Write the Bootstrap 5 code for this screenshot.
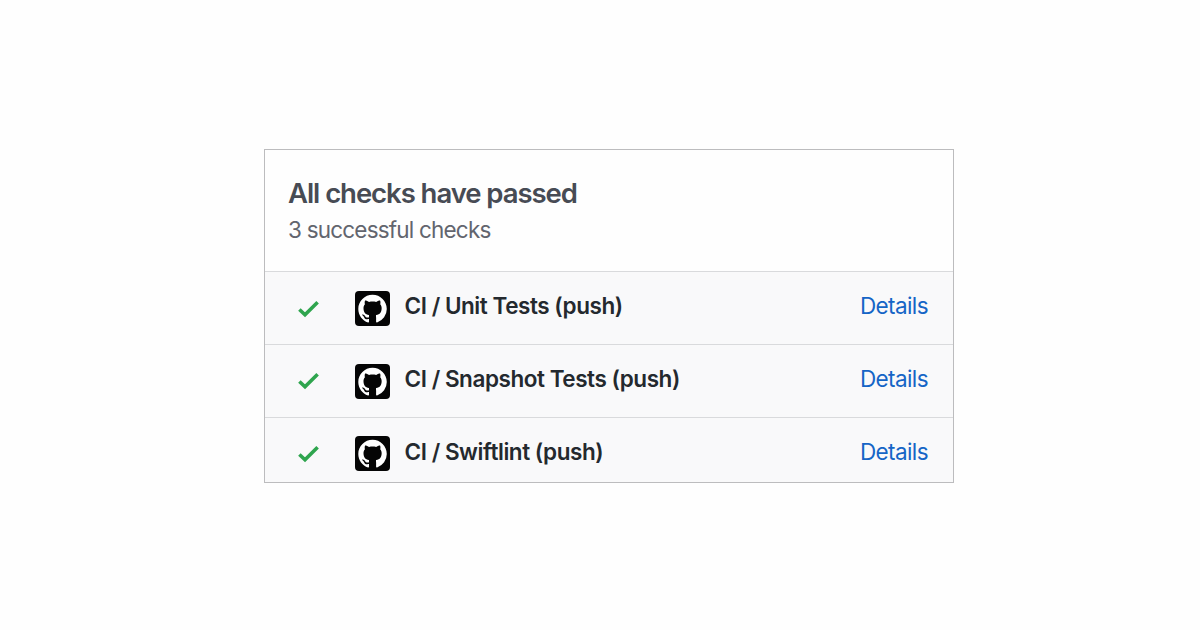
<!DOCTYPE html>
<html lang="en">
<head>
<meta charset="utf-8">
<title>All checks have passed</title>
<link href="https://cdn.jsdelivr.net/npm/bootstrap@5.3.0/dist/css/bootstrap.min.css" rel="stylesheet">
<style>
  body { background: #fefefe; font-family: Inter, "Liberation Sans", sans-serif; font-size: 23px; line-height: 30px; padding: 149px 0 0 264px; }
  .checks { width: 689.5px; height: 334px; border: 1px solid #bcbcbe; background: #fefefe; }
  .checks-head { height: 121px; padding: 26px 23px 0; }
  .checks-title { font-size: 27.5px; line-height: 34px; font-weight: 600; letter-spacing: -1.05px; color: #474b54; }
  .checks-sub { font-size: 22.5px; line-height: 30px; padding-top: 5px; letter-spacing: -.8px; color: #62656e; }
  .check-row { height: 73px; background: #f9f9fa; border-top: 1px solid #d9dadc; padding: 0 24.5px 0 33px; }
  .check-row svg { flex: none; }
  .tick { width: 22px; height: 18px; margin-top: 28px; }
  .logo { width: 35px; height: 35px; margin: 19px 14.5px 0 35px; }
  .check-row:last-child .logo { margin-top: 18px; }
  .check-row:not(:nth-child(2)) .tick { margin-top: 27px; }
  .check-name { padding-top: 19px; font-size: 22.5px; font-weight: 600; letter-spacing: -.45px; color: #24292e; }
  .check-link { padding-top: 19px; font-size: 22.5px; letter-spacing: -.6px; color: #1565c6; }
</style>
<script src="https://cdn.jsdelivr.net/npm/bootstrap@5.3.0/dist/js/bootstrap.bundle.min.js"></script>
</head>
<body>
<svg class="d-none">
  <symbol id="tick" viewBox="0 0 22 18"><path d="M1.4 9.5 7 14.8 19.6 2.3" fill="none" stroke="#2fa54e" stroke-width="3.6"/></symbol>
  <symbol id="mark" viewBox="0 0 35 35">
    <rect width="35" height="35" rx="4" fill="#050505"/>
    <path transform="translate(3.3 3.7) scale(1.78)" fill="#fff" d="M8 0C3.58 0 0 3.58 0 8c0 3.54 2.29 6.53 5.47 7.59.4.07.55-.17.55-.38 0-.19-.01-.82-.01-1.49-2.01.37-2.53-.49-2.69-.94-.09-.23-.48-.94-.82-1.13-.28-.15-.68-.52-.01-.53.63-.01 1.08.58 1.23.82.72 1.21 1.87.87 2.33.66.07-.52.28-.87.51-1.07-1.78-.2-3.64-.89-3.64-3.95 0-.87.31-1.59.82-2.15-.08-.2-.36-1.02.08-2.12 0 0 .67-.21 2.2.82.64-.18 1.32-.27 2-.27s1.36.09 2 .27c1.53-1.04 2.2-.82 2.2-.82.44 1.1.16 1.92.08 2.12.51.56.82 1.27.82 2.15 0 3.07-1.87 3.75-3.65 3.95.29.25.54.73.54 1.48 0 1.07-.01 1.93-.01 2.2 0 .21.15.46.55.38A8.01 8.01 0 0 0 16 8c0-4.42-3.58-8-8-8z"/>
    <path d="M14 24h7v9h-7z" fill="#050505"/>
  </symbol>
</svg>
<main class="checks overflow-hidden">
  <header class="checks-head">
    <h1 class="checks-title m-0">All checks have passed</h1>
    <p class="checks-sub m-0">3 successful checks</p>
  </header>
  <div class="check-row d-flex align-items-start">
    <svg class="tick"><use href="#tick"/></svg><svg class="logo"><use href="#mark"/></svg>
    <span class="check-name">CI / Unit Tests (push)</span>
    <a class="check-link ms-auto text-decoration-none" href="#">Details</a>
  </div>
  <div class="check-row d-flex align-items-start">
    <svg class="tick"><use href="#tick"/></svg><svg class="logo"><use href="#mark"/></svg>
    <span class="check-name">CI / Snapshot Tests (push)</span>
    <a class="check-link ms-auto text-decoration-none" href="#">Details</a>
  </div>
  <div class="check-row d-flex align-items-start">
    <svg class="tick"><use href="#tick"/></svg><svg class="logo"><use href="#mark"/></svg>
    <span class="check-name">CI / Swiftlint (push)</span>
    <a class="check-link ms-auto text-decoration-none" href="#">Details</a>
  </div>
</main>
</body>
</html>
